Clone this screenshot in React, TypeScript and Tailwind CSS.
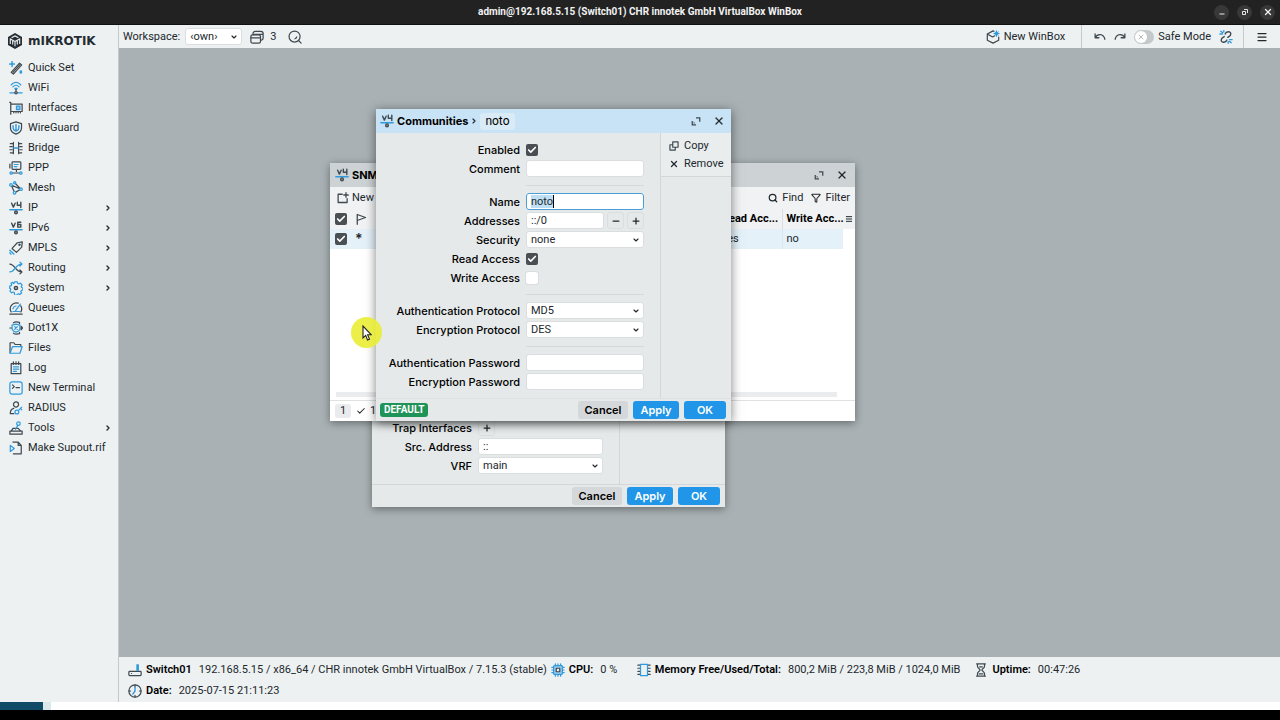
import React from "react";
import { Check, ChevronDown, ChevronRight, Filter, Menu, Minus, Plus, Search, X } from "lucide-react";

const DARK = "#3f4950";
const BLUE = "#2f9ade";

interface IconProps {
  children: React.ReactNode;
  className?: string;
}

const Icon: React.FC<IconProps> = ({ children, className = "size-3.5" }) => (
  <svg
    viewBox="0 0 16 16"
    fill="none"
    stroke={DARK}
    strokeWidth="1.4"
    strokeLinecap="round"
    strokeLinejoin="round"
    className={`shrink-0 ${className}`}
    aria-hidden="true"
  >
    {children}
  </svg>
);

const VersionIcon: React.FC<{ six?: boolean }> = ({ six }) => (
  <Icon>
    <path d="M3 2.5l2 4.5 2-4.5" strokeWidth="1.6" />
    {six ? (
      <path d="M13.5 1.5H10V7h3.5V4H10" strokeWidth="1.6" />
    ) : (
      <path d="M9.5 1.5v3.3h4M13.5 1.5V7.5" strokeWidth="1.6" />
    )}
    <path d="M1 10h14" stroke={BLUE} strokeWidth="1.7" />
    <circle cx="8" cy="13" r="1.6" fill="#8a9196" />
  </Icon>
);

const menu: { label: string; sub?: boolean; icon: React.ReactNode }[] = [
  {
    label: "Quick Set",
    icon: (
      <Icon>
        <path d="M2.5 13l9.500-10.500 2.500 2L5 15z" />
        <path d="M4.500 13L12.300 4.500" />
        <path d="M3.500 .800v5.400M.800 3.500h5.400" stroke={BLUE} strokeWidth="1.700" />
        <path d="M13.500 12v1" stroke={BLUE} strokeWidth="3" />
      </Icon>
    ),
  },
  {
    label: "WiFi",
    icon: (
      <Icon>
        <path d="M2.500 4.500c3-4 8-4 11 0M4.500 6.800c2-2.600 5-2.600 7 0M6.600 9c.8-1 2-1 2.800 0" stroke={BLUE} />
        <path d="M8 9.500V12" />
        <path d="M1 13.500h14" stroke={BLUE} />
        <circle cx="8" cy="13.500" r="1.300" fill="#edf1f2" />
      </Icon>
    ),
  },
  {
    label: "Interfaces",
    icon: (
      <Icon>
        <path d="M.8 1.500h1.200V15M2 3.500h13v8.500H2M5.500 12v1.500M8 12v1.500M10.500 12v1.500M13 12v1.500" />
        <rect x="8.500" y="5.800" width="4" height="4" stroke={BLUE} fill="#8dc7ea" />
      </Icon>
    ),
  },
  {
    label: "WireGuard",
    icon: (
      <Icon>
        <path d="M8 1l6.300 2v5c0 3.500-3 5.800-6.300 7-3.300-1.200-6.300-3.500-6.300-7V3z" />
        <path d="M8 4v8M4.700 5.500c-.4 4 1 5.500 3.300 5.500s3.700-1.500 3.300-5.500" stroke={BLUE} strokeWidth="1.600" />
      </Icon>
    ),
  },
  {
    label: "Bridge",
    icon: (
      <Icon>
        <path d="M5 1.500v13M11 1.500v13M1.500 3H5M1 6.500h2.500M1 10h2.500M1.500 13.500H5M11 3h3.500M12.500 6.500H15M12.500 10H15M11 13.500h3.500" />
        <path d="M5.500 8h5" stroke={BLUE} strokeWidth="1.700" />
      </Icon>
    ),
  },
  {
    label: "PPP",
    icon: (
      <Icon>
        <rect x="3.500" y="1" width="10" height="8.500" rx="1" />
        <path d="M1 3.500v4.500M8.500 9.500V12" />
        <path d="M6 4h4.500M6 6.500h3" stroke={BLUE} />
        <path d="M4 13.700h8" />
        <circle cx="2.500" cy="13.700" r="1.400" stroke={BLUE} />
        <circle cx="13.500" cy="13.700" r="1.400" stroke={BLUE} />
      </Icon>
    ),
  },
  {
    label: "Mesh",
    icon: (
      <Icon>
        <path d="M2.500 4.500l4 9 7-4.200L6.500 2M2.500 4.500l11 4.800" />
        <g stroke={BLUE} fill="#edf1f2">
          <circle cx="2.300" cy="4.500" r="1.500" />
          <circle cx="6.300" cy="13.500" r="1.500" />
          <circle cx="13.700" cy="9.300" r="1.500" />
          <circle cx="6.500" cy="2" r="1.200" />
        </g>
      </Icon>
    ),
  },
  { label: "IP", sub: true, icon: <VersionIcon /> },
  { label: "IPv6", sub: true, icon: <VersionIcon six /> },
  {
    label: "MPLS",
    sub: true,
    icon: (
      <Icon>
        <path d="M3.500 8.500L9.500 2l5.700-1-.7 6L8.500 13z" />
        <circle cx="12" cy="4.300" r=".7" />
        <path d="M1 10.500l1.500 1.500M1 13.500l1.200 1.500M3.500 12.800L5.500 15" stroke={BLUE} strokeWidth="1.600" />
      </Icon>
    ),
  },
  {
    label: "Routing",
    sub: true,
    icon: (
      <Icon>
        <path d="M1 3.500c6 0 6 9 13.500 9M12.500 10.300l2.300 2.200-2.300 2.200" />
        <path d="M1 12.500c6 0 6-9 13.500-9M12.500 1.300l2.300 2.200-2.300 2.200" stroke={BLUE} />
      </Icon>
    ),
  },
  {
    label: "System",
    sub: true,
    icon: (
      <Icon>
        <path
          d="M6.500 1h3l.5 1.900 1.200.5 1.800-1 2 2.100-1 1.700.4 1.200 1.500.6v2l-1.900.8-.5 1.100.9 1.700-2 1.900-1.700-.9-1.200.5-.5 1.400H6.500L6 13.100l-1.200-.5-1.800.9-1.900-2 .9-1.700-.4-1.100L.700 8.200l.2-2.300 1.600-.6.500-1.100L2.200 2.600l1.900-1L5.300 3z"
          stroke={BLUE}
        />
        <circle cx="8" cy="8" r="1.800" strokeWidth="1.700" />
      </Icon>
    ),
  },
  {
    label: "Queues",
    icon: (
      <Icon>
        <path d="M2.500 12.500a6.800 6.800 0 0 1 8-10M13.500 5.500a6.800 6.800 0 0 1 0 7M1 15h14" />
        <path d="M4.500 12h7.500M7.500 11L13 3.500M4.500 9c.5-2 1.800-3 3.500-3.300" stroke={BLUE} />
      </Icon>
    ),
  },
  {
    label: "Dot1X",
    icon: (
      <Icon>
        <path d="M5 2.200C6.500.800 9.500.800 12 1.500v1.500M5 13.800c1.500 1.400 4.500 1.400 7 .7V13M1 8h2M13 8h2.500M13.700 6L15.500 8l-1.800 2" />
        <path d="M8 3.500l4.500 1.200v3.600c0 2.200-2 3.600-4.500 4.500-2.500-.9-4.500-2.300-4.500-4.500V4.700z" stroke={BLUE} />
        <path d="M6.500 6.500l3 3M9.500 6.500l-3 3" stroke={BLUE} />
      </Icon>
    ),
  },
  {
    label: "Files",
    icon: (
      <Icon>
        <path d="M1.200 13.500v-11.500h4.300l1.500 2h6.500v2" />
        <path d="M1.200 14L4 6.500h11L12.500 14z" stroke={BLUE} />
      </Icon>
    ),
  },
  {
    label: "Log",
    icon: (
      <Icon>
        <path d="M2.500 3h11v11.500h-11z" />
        <path d="M5 1v3M8 1v3M11 1v3" />
        <path d="M5 6.800h6M5 9.300h6M5 11.800h3.500" stroke={BLUE} />
      </Icon>
    ),
  },
  {
    label: "New Terminal",
    icon: (
      <Icon>
        <rect x="1" y="1" width="14" height="14" rx="2.500" stroke={BLUE} />
        <path d="M4 4.500l2 2-2 2M8 7.500h4" />
      </Icon>
    ),
  },
  {
    label: "RADIUS",
    icon: (
      <Icon>
        <circle cx="8" cy="4" r="2.900" />
        <path d="M5.500 14.500h-4c0-3.500 1.500-5.500 4-6" />
        <circle cx="9" cy="12.500" r="2.200" stroke={BLUE} />
        <path d="M10.500 11l4-4M13 8.500l1.500 1.500" stroke={BLUE} />
      </Icon>
    ),
  },
  {
    label: "Tools",
    sub: true,
    icon: (
      <Icon>
        <path d="M1 11.500h14V15H1zM2.500 11.500L4.500 8.500h6l3 3" />
        <path d="M7.500 9.500L10 5" stroke={BLUE} />
        <circle cx="10.800" cy="3" r="2" stroke={BLUE} />
      </Icon>
    ),
  },
  {
    label: "Make Supout.rif",
    icon: (
      <Icon>
        <path d="M4.500 1.200h6L14 5v9.700H5M10.500 1.200V5H14" />
        <path d="M1.500 5L6 8.500 1.500 12z" stroke={BLUE} />
      </Icon>
    ),
  },
];

const fieldBox =
  "h-[17px] w-full rounded-[3px] border border-[#dadedf] bg-white px-1 text-[11px] leading-[15px] text-[#22282c] outline-none";

const TextField: React.FC<{ id: string; value?: string }> = ({ id, value = "" }) => (
  <input id={id} type="text" defaultValue={value} className={fieldBox} />
);

const SelectField: React.FC<{ id: string; value: string }> = ({ id, value }) => (
  <span className="relative flex w-full items-center">
    <select id={id} className={`appearance-none ${fieldBox}`}>
      <option>{value}</option>
    </select>
    <ChevronDown className="pointer-events-none absolute right-1 size-2" strokeWidth={3.5} />
  </span>
);

const CheckField: React.FC<{ id: string; checked?: boolean; label?: string }> = ({ id, checked, label }) => (
  <span className="relative flex size-3 items-center justify-center">
    <input
      id={id}
      type="checkbox"
      aria-label={label}
      defaultChecked={checked}
      className="size-3 appearance-none rounded-[2px] bg-white outline-1 outline-[#dadedf] checked:bg-[#4a4f53] checked:outline-0"
    />
    {checked && <Check className="pointer-events-none absolute size-2.5 text-white" strokeWidth={4} />}
  </span>
);

const Row: React.FC<{ id: string; label: string; children: React.ReactNode }> = ({ id, label, children }) => (
  <div className="flex h-[19px] items-center gap-[6px]">
    <label htmlFor={id} className="flex-1 text-right font-[Inter] font-medium whitespace-nowrap text-black">
      {label}
    </label>
    {children}
  </div>
);

const Field: React.FC<{ children: React.ReactNode }> = ({ children }) => (
  <div className="flex w-[118px] items-center">{children}</div>
);

const Divider = () => (
  <div className="flex h-3.5 items-center justify-end">
    <div className="h-px w-[118px] bg-[#d5d9db]" />
  </div>
);

const StepButton: React.FC<{ id?: string; label: string; children: React.ReactNode }> = ({ id, label, children }) => (
  <button
    id={id}
    type="button"
    aria-label={label}
    className="flex size-[17px] items-center justify-center rounded-[3px] border border-[#dadedf]"
  >
    {children}
  </button>
);

const FooterButtons = () => (
  <div className="flex gap-[5px] font-[Inter] text-[11px] font-semibold">
    <button className="h-[18px] w-[50px] rounded-[3px] bg-[#d5d8da] text-black">Cancel</button>
    <button className="h-[18px] w-[46px] rounded-[3px] bg-[#2196e8] text-white">Apply</button>
    <button className="h-[18px] w-[42px] rounded-[3px] bg-[#2196e8] text-white">OK</button>
  </div>
);

const WindowControls = () => (
  <div className="ml-auto flex items-center gap-3">
    <button aria-label="Maximize">
      <Icon className="size-2.5">
        <path d="M8 3h6v6M2 8v6h6M5.500 10.500l-1 1" strokeWidth="2" strokeLinecap="butt" strokeLinejoin="miter" />
      </Icon>
    </button>
    <button aria-label="Close">
      <X className="size-3" strokeWidth={2.5} />
    </button>
  </div>
);

const Sidebar = () => (
  <nav className="flex w-[119px] shrink-0 flex-col border-r border-[#c3c9cc] bg-[#edf1f2]">
    <div className="flex h-8 items-center gap-[5px] pl-[7px] text-[#252c33]">
      <svg viewBox="0 0 16 16" className="size-4 shrink-0" aria-hidden="true">
        <path d="M8 0l7 4v8l-7 4-7-4V4z" fill="#252c33" />
        <path
          d="M3.300 11V6l2.400 1.300v4.200M5.700 7.300L8 8.600v4.600M8 8.600l2.300-1.300v4.200M10.300 7.300L12.700 6v5M4.500 4.800L8 2.900l3.500 1.900"
          fill="none"
          stroke="#edf1f2"
          strokeWidth="1.100"
        />
      </svg>
      <span className="font-['DejaVu_Sans'] text-[12px] font-bold">mIKROTIK</span>
    </div>
    <ul className="pt-px">
      {menu.map((item) => (
        <li key={item.label}>
          <button className="flex h-5 w-full items-center gap-[5px] pr-1.5 pl-[9px] text-left">
            {item.icon}
            <span>{item.label}</span>
            {item.sub && <ChevronRight className="ml-auto size-2" strokeWidth={4} />}
          </button>
        </li>
      ))}
    </ul>
  </nav>
);

const Toolbar = () => (
  <header className="flex h-[23px] shrink-0 items-center bg-[#edf1f2] pl-1">
    <label htmlFor="workspace">Workspace:</label>
    <span className="ml-[5px] flex w-[57px]">
      <SelectField id="workspace" value="‹own›" />
    </span>
    <button className="ml-2 flex items-center gap-1.5" aria-label="Windows">
      <Icon>
        <rect x="1" y="5.500" width="11" height="9.500" rx="2" />
        <path d="M1 9h11M3.500 5.500v-1A2.500 2.500 0 0 1 6 1.500h6.500A2.500 2.500 0 0 1 15 4v5.500a2 2 0 0 1-2 2h-1M5 5h10" />
      </Icon>
      <span>3</span>
    </button>
    <button className="ml-3" aria-label="Search">
      <Icon>
        <circle cx="7.500" cy="7.500" r="6.300" />
        <path d="M12 12l3 3M10 8a3 3 0 0 1-2 2" />
      </Icon>
    </button>
    <div className="ml-auto flex items-center self-stretch">
      <button className="flex items-center gap-1 pr-4">
        <Icon>
          <path d="M9 1.500L8 1 1.500 4.500v7.300L8 15l6.500-3.200V8M1.500 4.500L7.500 8l2.500-1.500" />
          <path d="M12 1v6M9 4h6M10 2l4 4M14 2l-4 4" stroke={BLUE} strokeWidth="1.200" />
        </Icon>
        New WinBox
      </button>
      <div className="flex items-center self-stretch border-x border-[#c3c9cc] pr-2.5 pl-3">
        <button aria-label="Undo">
          <Icon className="size-3">
            <path d="M1.500 4v5h5M1.500 9c3-5.500 11-6 13 2" strokeWidth="1.700" />
          </Icon>
        </button>
        <button className="ml-2" aria-label="Redo">
          <Icon className="size-3">
            <path d="M14.500 4v5h-5M14.500 9c-3-5.500-11-6-13 2" strokeWidth="1.700" />
          </Icon>
        </button>
        <label className="ml-2 flex items-center gap-1">
          <span className="relative flex h-3.5 w-5 items-center">
            <input type="checkbox" className="h-3.5 w-5 appearance-none rounded-full bg-[#c5c8ca]" />
            <span className="pointer-events-none absolute left-px flex size-3 items-center justify-center rounded-full bg-white">
              <X className="size-2 text-[#b5b9bb]" strokeWidth={3} />
            </span>
          </span>
          Safe Mode
        </label>
        <button className="ml-2" aria-label="Reconnect">
          <Icon>
            <path d="M7 4.500C8 1.500 13.500 1 13.500 4.500c0 2-2 3-3.500 4M9 11.500c-1 3-6.500 3.500-6.500 0 0-2 2-3 3.500-4" strokeWidth="1.600" />
            <path d="M1 4.500h3M2 1.500l2 1.500M5.500 .800v1.500M12 11h3M12 13l2 1.500M10.500 13.500v1.700" stroke={BLUE} strokeWidth="1.600" />
          </Icon>
        </button>
      </div>
      <button className="px-3" aria-label="Menu">
        <Menu className="size-3" strokeWidth={2.5} />
      </button>
    </div>
  </header>
);

const SnmpSettingsWindow = () => (
  <section className="absolute top-[347px] left-[253px] flex w-[353px] flex-col bg-[#e5e9ea] shadow-[0_2px_8px_rgba(0,0,0,0.4)]">
    <div className="w-[248px] border-r border-[#d3d7d9] pt-[23px] pr-4 pb-[9px]">
      <Row id="trap" label="Trap Interfaces">
        <div className="w-[125px]">
          <StepButton id="trap" label="Add trap interface">
            <Plus className="size-2.5" strokeWidth={3} />
          </StepButton>
        </div>
      </Row>
      <Row id="src" label="Src. Address">
        <div className="flex w-[125px]">
          <TextField id="src" value="::" />
        </div>
      </Row>
      <Row id="vrf" label="VRF">
        <div className="flex w-[125px]">
          <SelectField id="vrf" value="main" />
        </div>
      </Row>
    </div>
    <footer className="flex h-[23px] items-center justify-end border-t border-[#d3d7d9] pr-[5px]">
      <FooterButtons />
    </footer>
  </section>
);

const CommunitiesListWindow = () => (
  <section className="absolute top-[115px] left-[211px] flex h-[258px] w-[525px] flex-col bg-white shadow-[0_2px_8px_rgba(0,0,0,0.4)]">
    <div className="flex h-6 shrink-0 items-center gap-[3px] bg-[#cdd2d4] pr-[7px] pl-[5px]">
      <VersionIcon />
      <h2 className="font-[Inter] font-bold text-black">SNMP Communities</h2>
      <WindowControls />
    </div>
    <div className="flex h-[22px] shrink-0 items-center bg-[#f0f2f3] pr-[5px] pl-[7px]">
      <button className="flex items-center gap-[3px]">
        <Icon className="size-3">
          <path d="M7 3H1.500v11h12V9M12 1v6M9 4h6" strokeWidth="1.700" />
        </Icon>
        New
      </button>
      <button className="ml-auto flex items-center gap-1">
        <Search className="size-2.5" strokeWidth={3} />
        Find
      </button>
      <button className="ml-2 flex items-center gap-1">
        <Filter className="size-2.5" strokeWidth={2.5} />
        Filter
      </button>
    </div>
    <table className="w-full table-fixed border-collapse text-left">
      <thead>
        <tr className="h-5 bg-[#f0f2f3]">
          <th className="w-[22px] pl-[5px]">
            <CheckField id="all" checked label="Select all" />
          </th>
          <th className="w-6 pl-[3px]">
            <Icon className="size-3">
              <path d="M3 15V2l11 4-11 4" strokeWidth="1.700" />
            </Icon>
          </th>
          <th className="pl-1 font-semibold">Name</th>
          <th className="w-16 border-r border-[#d9dddf] pl-1 font-bold whitespace-nowrap text-black">Read Acc...</th>
          <th className="w-[61px] pl-1 font-bold whitespace-nowrap text-black">Write Acc...</th>
          <th className="w-3 pl-[2px]">
            <Menu className="size-2" strokeWidth={3} aria-label="Columns" />
          </th>
        </tr>
      </thead>
      <tbody>
        <tr className="h-5">
          <td className="bg-[#e4f1f8] pl-[5px]">
            <CheckField id="row1" checked label="Select row" />
          </td>
          <td className="bg-[#e4f1f8] pl-[3px] font-[Inter] text-[14px] leading-4 font-semibold">*</td>
          <td className="bg-[#e4f1f8] pl-1">noto</td>
          <td className="border-r border-[#d9e6ec] bg-[#e4f1f8] pl-1">yes</td>
          <td className="bg-[#e4f1f8] pl-1">no</td>
          <td />
        </tr>
      </tbody>
    </table>
    <div className="mt-auto mr-[18px] mb-[3px] ml-1.5 h-[5px] shrink-0 bg-[#ebeced]" />
    <footer className="flex h-[21px] shrink-0 items-center border-t border-[#dfe2e3] pl-[5px]">
      <span className="flex h-3.5 w-4 items-center justify-center rounded-[3px] bg-[#e9ebec]">1</span>
      <Check className="ml-[5px] size-2.5" strokeWidth={2.5} />
      <span className="ml-1">1</span>
    </footer>
  </section>
);

const CommunityDialog = () => (
  <section className="absolute top-[61px] left-[257px] flex h-[312px] w-[355px] flex-col bg-[#e5e9ea] shadow-[0_2px_10px_rgba(0,0,0,0.5)]">
    <div className="flex h-6 shrink-0 items-center bg-[#c8e3f5] pr-1.5 pl-1">
      <VersionIcon />
      <h2 className="ml-[3px] font-[Inter] font-bold text-black">Communities</h2>
      <ChevronRight className="mx-[2px] size-2" strokeWidth={3.5} />
      <span className="flex h-[17px] items-center rounded-[3px] bg-[#d9ebf7] px-[5px] text-[12px] text-black">noto</span>
      <WindowControls />
    </div>
    <div className="flex min-h-0 flex-1">
      <form className="w-[285px] border-r border-[#d3d7d9] pt-[7px] pr-4">
        <Row id="enabled" label="Enabled">
          <Field>
            <CheckField id="enabled" checked />
          </Field>
        </Row>
        <Row id="comment" label="Comment">
          <Field>
            <TextField id="comment" />
          </Field>
        </Row>
        <Divider />
        <Row id="name" label="Name">
          <Field>
            <span className="relative flex w-full items-center rounded-[3px] bg-white">
              <span className="absolute left-[5px] h-[13px] w-[23px] border-r border-black bg-[#bfe0f4]" />
              <input
                id="name"
                type="text"
                defaultValue="noto"
                className="relative h-[17px] w-full rounded-[3px] border border-[#4a9fd6] bg-transparent px-1 text-[11px] outline-none"
              />
            </span>
          </Field>
        </Row>
        <Row id="addresses" label="Addresses">
          <Field>
            <span className="mr-[3px] flex flex-1">
              <TextField id="addresses" value="::/0" />
            </span>
            <span className="flex gap-[3px]">
              <StepButton label="Remove address">
                <Minus className="size-2.5" strokeWidth={3} />
              </StepButton>
              <StepButton label="Add address">
                <Plus className="size-2.5" strokeWidth={3} />
              </StepButton>
            </span>
          </Field>
        </Row>
        <Row id="security" label="Security">
          <Field>
            <SelectField id="security" value="none" />
          </Field>
        </Row>
        <Row id="read" label="Read Access">
          <Field>
            <CheckField id="read" checked />
          </Field>
        </Row>
        <Row id="write" label="Write Access">
          <Field>
            <CheckField id="write" />
          </Field>
        </Row>
        <Divider />
        <Row id="auth-protocol" label="Authentication Protocol">
          <Field>
            <SelectField id="auth-protocol" value="MD5" />
          </Field>
        </Row>
        <Row id="enc-protocol" label="Encryption Protocol">
          <Field>
            <SelectField id="enc-protocol" value="DES" />
          </Field>
        </Row>
        <Divider />
        <Row id="auth-password" label="Authentication Password">
          <Field>
            <TextField id="auth-password" />
          </Field>
        </Row>
        <Row id="enc-password" label="Encryption Password">
          <Field>
            <TextField id="enc-password" />
          </Field>
        </Row>
      </form>
      <div className="flex-1">
        <div className="flex flex-col gap-px border-b border-[#d3d7d9] bg-[#e9edee] pt-1 pb-1 pl-2">
          <button className="flex h-[17px] items-center gap-[5px]">
            <Icon className="size-2.5">
              <path d="M6 1.500h8.500V10H6zM6 6H1.500v8.500H10V10" strokeWidth="1.900" />
            </Icon>
            Copy
          </button>
          <button className="flex h-[17px] items-center gap-[5px]">
            <X className="size-2.5" strokeWidth={3} />
            Remove
          </button>
        </div>
      </div>
    </div>
    <footer className="flex h-[23px] shrink-0 items-center justify-between border-t border-[#dde1e2] pr-[5px] pl-1">
      <span className="flex h-3.5 items-center rounded-[3px] bg-[#1f9458] px-1 text-[10px] font-bold text-white">
        DEFAULT
      </span>
      <FooterButtons />
    </footer>
  </section>
);

const Pointer = () => (
  <div className="pointer-events-none absolute top-[269px] left-[232px] flex size-[31px] items-center justify-center rounded-full bg-[#eaed35]/90">
    <svg viewBox="0 0 10 16" className="h-4 w-2.5" aria-hidden="true">
      <path d="M1 1v12l2.700-2.600L5.500 15l2-.9-1.900-4.300h3.700z" fill="#fff" stroke="#222" strokeWidth="1.100" />
    </svg>
  </div>
);

const StatusItem: React.FC<{ icon: React.ReactNode; label: string; value: string }> = ({ icon, label, value }) => (
  <div className="flex items-center">
    {icon}
    <span className="ml-1 font-semibold text-black">{label}</span>
    <span className="ml-[7px]">{value}</span>
  </div>
);

const StatusBar = () => (
  <footer className="flex shrink-0 flex-col gap-px bg-[#edf1f2] pt-[3px] pb-px pl-[9px] whitespace-nowrap">
    <div className="flex h-5 items-center">
      <StatusItem
        icon={
          <Icon>
            <rect x="1" y="9.500" width="14" height="5" rx="1" />
            <path d="M4 12h.1" />
            <path d="M11 9V1.500" stroke={BLUE} strokeWidth="3" strokeLinecap="butt" />
          </Icon>
        }
        label="Switch01"
        value="192.168.5.15 / x86_64 / CHR innotek GmbH VirtualBox / 7.15.3 (stable)"
      />
      <div className="ml-1 w-[86px]">
        <StatusItem
          icon={
            <Icon>
              <rect x="3" y="3" width="10" height="10" rx="1" stroke={BLUE} fill="#9dcdea" />
              <path
                d="M5 1v1.500M8 1v1.500M11 1v1.500M5 13.500V15M8 13.500V15M11 13.500V15M1 5h1.500M1 8h1.500M1 11h1.500M13.500 5H15M13.500 8H15M13.500 11H15"
                stroke={BLUE}
              />
              <rect x="6" y="6" width="4" height="4" fill="#edf1f2" />
            </Icon>
          }
          label="CPU:"
          value="0 %"
        />
      </div>
      <StatusItem
        icon={
          <Icon>
            <path d="M1 2.500h3M1 6h3M1 9.500h3M1 13h3M12 2.500h3M12 6h3M12 9.500h3M12 13h3" />
            <rect x="4" y="1.500" width="8" height="13" stroke={BLUE} />
          </Icon>
        }
        label="Memory Free/Used/Total:"
        value="800,2 MiB / 223,8 MiB / 1024,0 MiB"
      />
      <div className="ml-3.5">
        <StatusItem
          icon={
            <Icon>
              <path d="M3 1h10M3 15h10M4 1.500V4c0 2 3 3 3 4s-3 2-3 4v2.500M12 1.500V4c0 2-3 3-3 4s3 2 3 4v2.500M6 12.500h4M6.500 4.500h3" />
            </Icon>
          }
          label="Uptime:"
          value="00:47:26"
        />
      </div>
    </div>
    <div className="flex h-5 items-center">
      <StatusItem
        icon={
          <Icon>
            <circle cx="8" cy="8" r="7" />
            <path d="M8 1v2M8 13v2M1 8h2M13 8h2" />
            <path d="M8 3.500V8l-2.500 3.500" stroke={BLUE} strokeWidth="1.600" />
          </Icon>
        }
        label="Date:"
        value="2025-07-15 21:11:23"
      />
    </div>
  </footer>
);

const TitleButton: React.FC<{ label: string; children: React.ReactNode }> = ({ label, children }) => (
  <button aria-label={label} className="flex size-[15px] items-center justify-center rounded-full bg-[#383838]">
    {children}
  </button>
);

const TitleBar = () => (
  <header className="relative flex h-[25px] shrink-0 items-center justify-center border-b border-[#111] bg-[#222222] text-[10px] font-bold text-[#f2f2f2]">
    <h1>admin@192.168.5.15 (Switch01) CHR innotek GmbH VirtualBox WinBox</h1>
    <div className="absolute right-[5px] flex gap-2">
      <TitleButton label="Minimize">
        <svg viewBox="0 0 8 8" className="size-2" fill="none" stroke="#e8e8e8" aria-hidden="true">
          <path d="M1.500 6h5" />
        </svg>
      </TitleButton>
      <TitleButton label="Restore">
        <svg viewBox="0 0 8 8" className="size-2" fill="none" stroke="#e8e8e8" aria-hidden="true">
          <path d="M1.500 3.500h3v3h-3zM3 1.500h3.500V5" />
        </svg>
      </TitleButton>
      <TitleButton label="Close">
        <X className="size-2.5" strokeWidth={3} />
      </TitleButton>
    </div>
  </header>
);

const App: React.FC = () => (
  <div className="flex h-screen flex-col overflow-hidden bg-black font-[Roboto,sans-serif] text-[11px] leading-4 text-[#22282c]">
    <TitleBar />
    <div className="flex min-h-0 flex-1">
      <Sidebar />
      <div className="flex min-w-0 flex-1 flex-col">
        <Toolbar />
        <main className="relative min-h-0 flex-1 overflow-hidden bg-[#a9b1b4]">
          <SnmpSettingsWindow />
          <CommunitiesListWindow />
          <CommunityDialog />
          <Pointer />
        </main>
        <StatusBar />
      </div>
    </div>
    <div className="flex h-2 shrink-0 bg-white">
      <div className="w-[43px] bg-[#0f4a67]" />
      <div className="w-2 bg-[#dbe8ea]" />
    </div>
    <div className="h-2.5 shrink-0 bg-black" />
  </div>
);

export default App;
